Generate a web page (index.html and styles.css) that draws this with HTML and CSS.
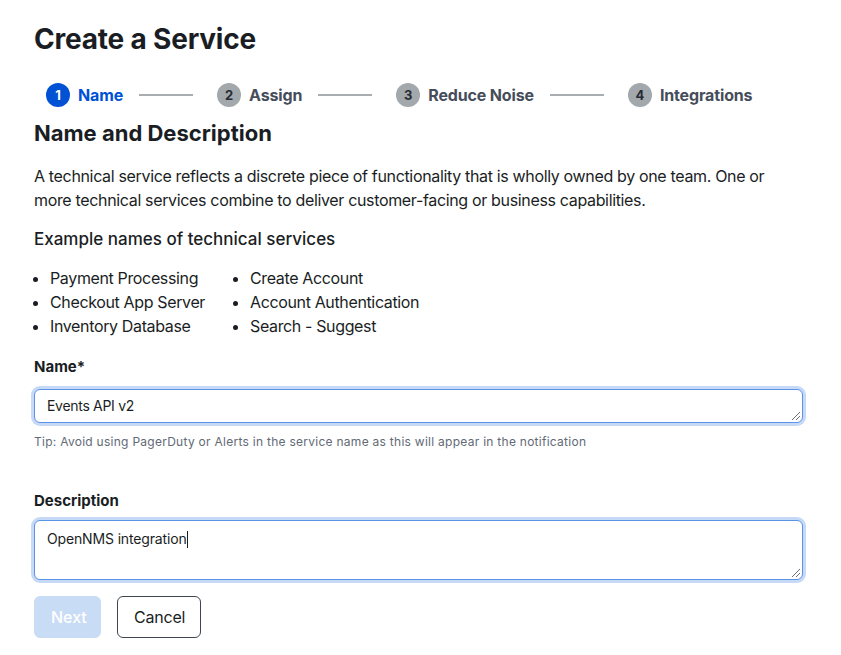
FILE: index.html
```html
<!DOCTYPE html>
<html lang="en">
<head>
<meta charset="utf-8">
<title>Create a Service</title>
<link rel="stylesheet" href="styles.css">
</head>
<body>
<main class="page">
  <h1 class="title">Create a Service</h1>

  <ol class="stepper">
    <li class="step active"><span class="dot">1</span><span class="label">Name</span></li>
    <li class="sep"></li>
    <li class="step"><span class="dot">2</span><span class="label">Assign</span></li>
    <li class="sep"></li>
    <li class="step"><span class="dot">3</span><span class="label">Reduce Noise</span></li>
    <li class="sep"></li>
    <li class="step"><span class="dot">4</span><span class="label">Integrations</span></li>
  </ol>

  <h2 class="section-title">Name and Description</h2>
  <p class="intro">A technical service reflects a discrete piece of functionality that is wholly owned by one team. One or more technical services combine to deliver customer-facing or business capabilities.</p>

  <h3 class="sub-title">Example names of technical services</h3>
  <div class="examples">
    <ul class="ex-col">
      <li>Payment Processing</li>
      <li>Checkout App Server</li>
      <li>Inventory Database</li>
    </ul>
    <ul class="ex-col">
      <li>Create Account</li>
      <li>Account Authentication</li>
      <li>Search - Suggest</li>
    </ul>
  </div>

  <form class="form">
    <div class="field">
      <label class="field-label" for="name">Name*</label>
      <div class="box box-name">
        <span class="box-text">Events API v2</span>
        <span class="grip"></span>
      </div>
      <p class="tip">Tip: Avoid using PagerDuty or Alerts in the service name as this will appear in the notification</p>
    </div>

    <div class="field field-desc">
      <label class="field-label" for="desc">Description</label>
      <div class="box box-desc">
        <span class="box-text">OpenNMS integration<span class="caret"></span></span>
        <span class="grip"></span>
      </div>
    </div>

    <div class="actions">
      <button type="button" class="btn btn-primary" disabled>Next</button>
      <button type="button" class="btn btn-secondary">Cancel</button>
    </div>
  </form>
</main>
</body>
</html>
```

FILE: styles.css
```css
* { box-sizing: border-box; }

html, body {
  margin: 0;
  padding: 0;
  background: #ffffff;
}

body {
  font-family: Inter, "Noto Sans", "Liberation Sans", sans-serif;
  color: #1a1e24;
  -webkit-font-smoothing: antialiased;
}

.page {
  width: 769px;
  margin-left: 34px;
  padding-top: 21px;
}

.title {
  margin: 0;
  font-size: 28px;
  line-height: 36px;
  font-weight: 700;
  color: #1a1e24;
  letter-spacing: -0.2px;
}

.stepper {
  list-style: none;
  margin: 0;
  padding: 0 0 0 12px;
  display: flex;
  align-items: center;
  height: 44px;
  margin-top: 16px;
}

.step {
  display: flex;
  align-items: center;
  gap: 8px;
}

.dot {
  width: 24px;
  height: 24px;
  border-radius: 50%;
  background: #a3a8ad;
  color: #262b33;
  font-size: 13px;
  font-weight: 700;
  display: flex;
  align-items: center;
  justify-content: center;
}

.label {
  font-size: 16px;
  font-weight: 700;
  color: #454d5a;
  letter-spacing: -0.15px;
}

.step.active .dot {
  background: #0051d4;
  color: #ffffff;
}

.step.active .label {
  color: #0051d4;
}

.sep {
  width: 54px;
  height: 2px;
  background: #a8adb2;
  margin: 0 24px 0 16px;
}

.section-title {
  margin: 1px 0 0;
  font-size: 22px;
  line-height: 30px;
  font-weight: 700;
  color: #1a1e24;
}

.intro {
  margin: 16px 0 0;
  font-size: 16px;
  line-height: 24px;
  color: #1a1e24;
  letter-spacing: -0.34px;
}

.sub-title {
  margin: 15px 0 0;
  font-size: 17px;
  line-height: 24px;
  font-weight: 500;
  color: #1a1e24;
}

.examples {
  display: flex;
  margin-top: 15px;
}

.ex-col {
  margin: 0;
  padding-left: 16px;
  width: 200px;
  font-size: 16px;
  line-height: 24px;
  letter-spacing: -0.36px;
}

.form {
  margin-top: 19px;
}

.field-label {
  display: block;
  font-size: 15px;
  line-height: 20px;
  font-weight: 700;
  color: #1a1e24;
}

.box {
  position: relative;
  margin-top: 12px;
  width: 769px;
  border: 1.5px solid #5b93e6;
  border-radius: 6px;
  box-shadow: 0 0 0 3px #c6daf7;
  background: #fff;
  padding: 0 12px;
  font-size: 14px;
  color: #1a1e24;
}

.box-name {
  height: 34px;
  display: flex;
  align-items: center;
}

.box-name .box-text {
  letter-spacing: -0.3px;
}

.box-desc {
  height: 60px;
  padding-top: 9px;
}

.box-desc .box-text {
  letter-spacing: -0.15px;
}

.box-text {
  line-height: 18px;
}

.caret {
  display: inline-block;
  width: 1px;
  height: 17px;
  background: #1a1e24;
  vertical-align: -4px;
}

.grip {
  position: absolute;
  right: 2px;
  bottom: 2px;
  width: 8px;
  height: 8px;
  background:
    linear-gradient(135deg, transparent 45%, #6c7178 45%, #6c7178 55%, transparent 55%) 0 0 / 8px 8px no-repeat,
    linear-gradient(135deg, transparent 70%, #6c7178 70%, #6c7178 80%, transparent 80%) 0 0 / 8px 8px no-repeat;
}

.tip {
  margin: 11px 0 0;
  font-size: 12px;
  line-height: 16px;
  color: #626a75;
  letter-spacing: 0.27px;
}

.field-desc {
  margin-top: 41px;
}

.field-desc .box {
  margin-top: 9px;
}

.actions {
  display: flex;
  gap: 16px;
  margin-top: 16px;
}

.btn {
  height: 42px;
  border-radius: 6px;
  font-family: inherit;
  font-size: 16px;
  padding: 0 16px;
  cursor: pointer;
}

.btn-primary {
  width: 67px;
  background: #c9dcf5;
  border: 1px solid #c9dcf5;
  color: #ffffff;
  font-weight: 500;
}

.btn-secondary {
  width: 84px;
  background: #ffffff;
  border: 1px solid #3f4650;
  color: #1a1e24;
  letter-spacing: -0.2px;
}
```
